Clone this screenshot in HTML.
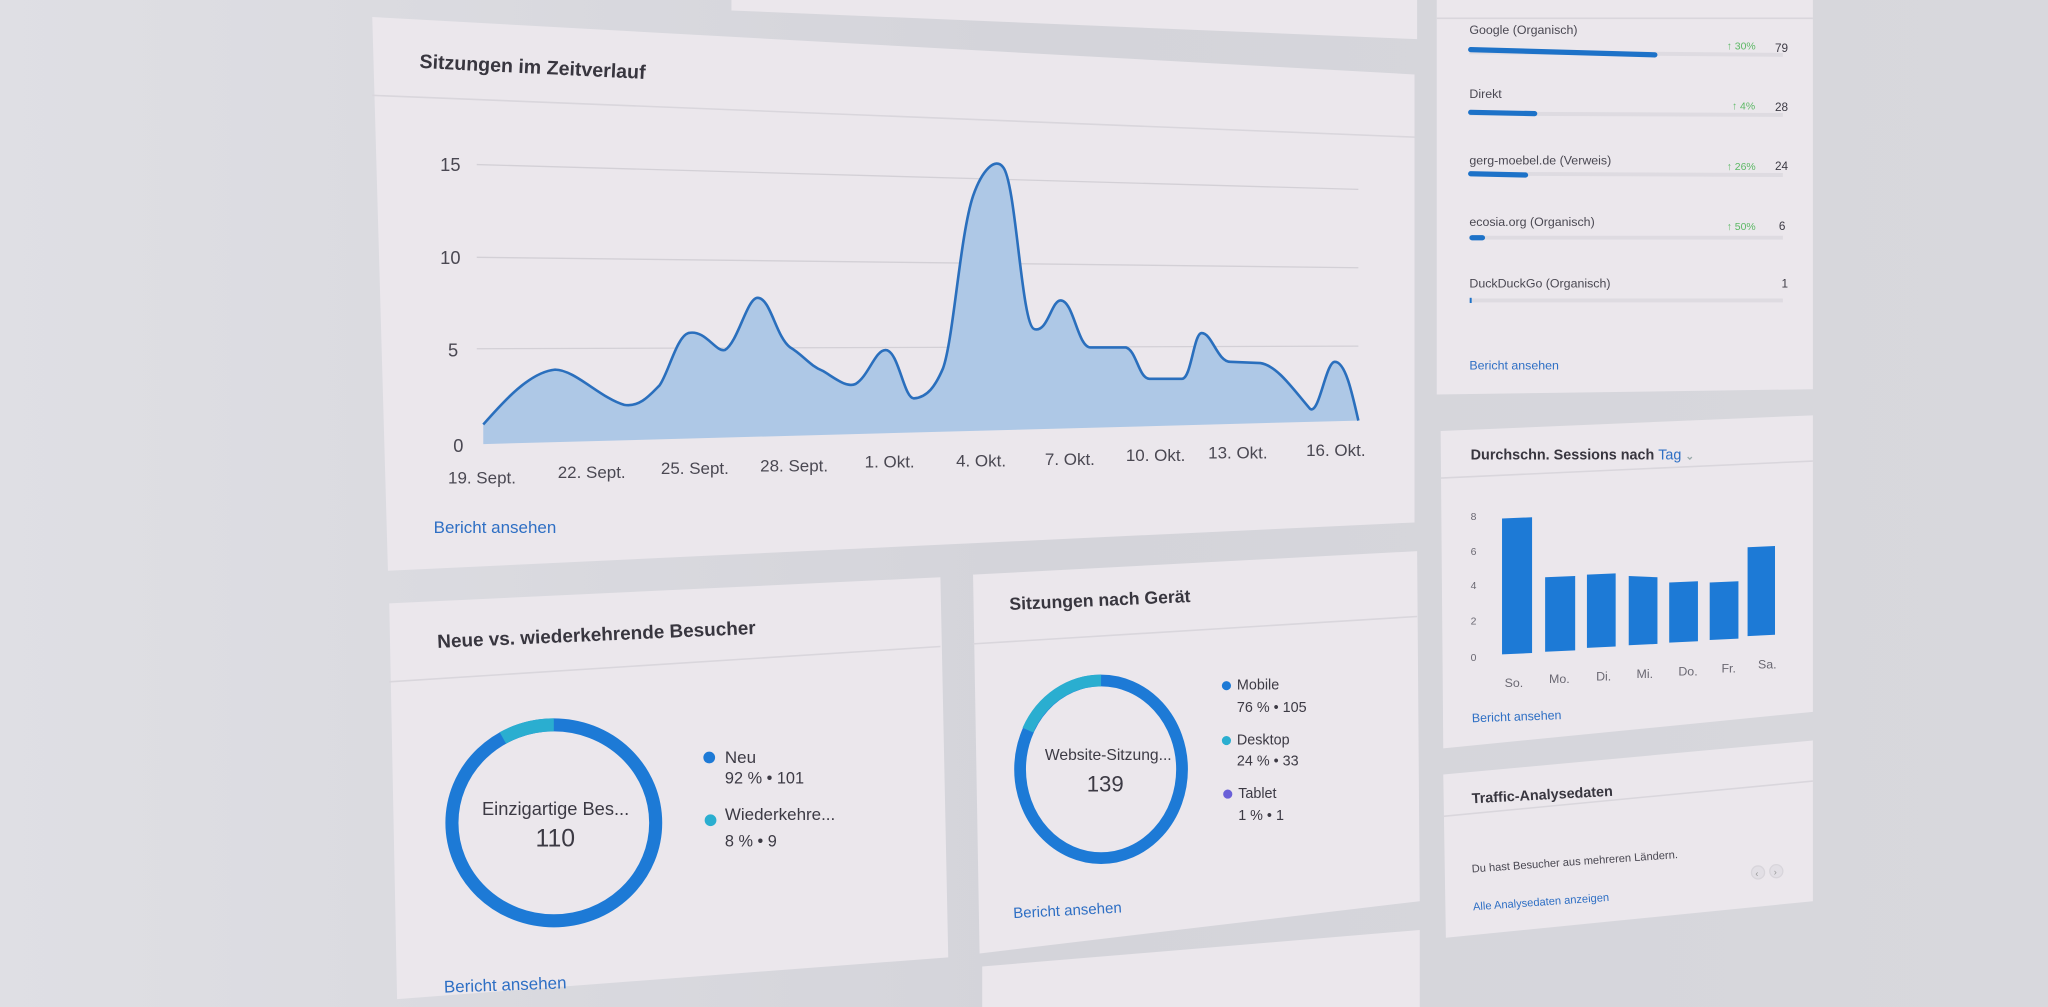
<!DOCTYPE html>
<html><head><meta charset="utf-8"><style>
html,body{margin:0;padding:0;background:#d7d7dd;overflow:hidden}
svg{display:block}
text{font-family:"Liberation Sans",sans-serif}
</style></head><body>
<svg width="2048" height="1007" viewBox="0 0 1568 771" xmlns="http://www.w3.org/2000/svg">
<defs>
<linearGradient id="bg" x1="0" y1="0" x2="1" y2="0">
<stop offset="0" stop-color="#dfdfe4"/><stop offset="0.5" stop-color="#d4d4da"/><stop offset="1" stop-color="#d8d8dd"/>
</linearGradient>
</defs>
<rect width="1568" height="771" fill="url(#bg)"/>
<g fill="#ebe7ec">
<polygon points="560,0 1085,0 1085,30 560,8"/>
<polygon points="285,13 1083,57 1083,400 297,437"/>
<polygon points="298,462 720,442 726,733 304,765"/>
<polygon points="745,440 1085,422 1087,690 750,730"/>
<polygon points="752,740 1087,712 1087,771 752,771"/>
<polygon points="1100,0 1388,0 1388,298 1100,302"/>
<polygon points="1103,330 1388,318 1388,545 1105,573"/>
<polygon points="1105,593 1388,567 1388,690 1107,718"/>
</g>
<g stroke="#d9d6dc" stroke-width="1.2" fill="none">
<line x1="285" y1="73" x2="1083" y2="105"/>
<line x1="298" y1="522" x2="720" y2="495"/>
<line x1="745" y1="493" x2="1085" y2="472"/>
<line x1="1103" y1="366" x2="1388" y2="353"/>
<line x1="1105" y1="625" x2="1388" y2="598"/>
<line x1="1100" y1="14" x2="1388" y2="14"/>
</g>
<text x="321" y="52" font-size="15" font-weight="bold" fill="#38363f" transform="rotate(2.8 321 52)">Sitzungen im Zeitverlauf</text>
<g stroke="#d3d0d6" stroke-width="1">
<line x1="365" y1="126" x2="1040" y2="145"/>
<line x1="365" y1="197" x2="1040" y2="205"/>
<line x1="365" y1="267" x2="1040" y2="265"/>
</g>
<g font-size="14" fill="#4a4852">
<text x="337" y="131">15</text><text x="337" y="202">10</text><text x="343" y="273">5</text><text x="347" y="346">0</text>
</g>
<path d="M370,325 C385,308 405,285 425,283 C440,283 460,305 478,310 C490,312 498,302 505,295 C512,285 518,258 527,255 C540,252 548,270 555,268 C565,262 572,228 580,228 C590,228 594,258 605,266 C615,272 620,280 630,284 C640,290 648,297 655,294 C665,288 670,268 678,268 C688,268 692,306 700,305 C710,304 716,296 722,282 C730,260 735,180 745,150 C752,130 762,120 768,128 C778,140 782,250 792,252 C802,255 805,230 812,230 C822,230 825,266 835,266 L862,266 C870,268 872,290 880,290 L905,290 C912,290 914,255 920,255 C928,255 932,277 942,277 L965,278 C978,280 990,298 1003,313 C1010,318 1015,277 1022,277 C1030,277 1035,300 1040,322 L370,340 Z" fill="#aec8e6" stroke="none"/>
<path d="M370,325 C385,308 405,285 425,283 C440,283 460,305 478,310 C490,312 498,302 505,295 C512,285 518,258 527,255 C540,252 548,270 555,268 C565,262 572,228 580,228 C590,228 594,258 605,266 C615,272 620,280 630,284 C640,290 648,297 655,294 C665,288 670,268 678,268 C688,268 692,306 700,305 C710,304 716,296 722,282 C730,260 735,180 745,150 C752,130 762,120 768,128 C778,140 782,250 792,252 C802,255 805,230 812,230 C822,230 825,266 835,266 L862,266 C870,268 872,290 880,290 L905,290 C912,290 914,255 920,255 C928,255 932,277 942,277 L965,278 C978,280 990,298 1003,313 C1010,318 1015,277 1022,277 C1030,277 1035,300 1040,322" fill="none" stroke="#2a6fbd" stroke-width="2"/>
<g font-size="13" fill="#4a4852">
<text x="343" y="370">19. Sept.</text><text x="427" y="366">22. Sept.</text><text x="506" y="363">25. Sept.</text><text x="582" y="361">28. Sept.</text><text x="662" y="358">1. Okt.</text><text x="732" y="357">4. Okt.</text><text x="800" y="356">7. Okt.</text><text x="862" y="353">10. Okt.</text><text x="925" y="351">13. Okt.</text><text x="1000" y="349">16. Okt.</text>
</g>
<text x="332" y="408" font-size="13" fill="#2e6fc4">Bericht ansehen</text>
<text x="335" y="496" font-size="14.5" font-weight="bold" fill="#38363f" transform="rotate(-2.5 335 496)">Neue vs. wiederkehrende Besucher</text>
<ellipse cx="424" cy="630" rx="78" ry="75" fill="none" stroke="#1d7ad6" stroke-width="10"/>
<path d="M385,565 A78,75 0 0 1 424,555" fill="none" stroke="#2aaed0" stroke-width="10"/>
<text x="369" y="624" font-size="14" fill="#3c3a44">Einzigartige Bes...</text>
<text x="410" y="648" font-size="19" fill="#3c3a44">110</text>
<circle cx="543" cy="580" r="4.5" fill="#1d7ad6"/><text x="555" y="584" font-size="13" fill="#3c3a44">Neu</text>
<text x="555" y="600" font-size="12.5" fill="#3c3a44">92 % • 101</text>
<circle cx="544" cy="628" r="4.5" fill="#2aaed0"/><text x="555" y="628" font-size="13" fill="#3c3a44">Wiederkehre...</text>
<text x="555" y="648" font-size="12.5" fill="#3c3a44">8 % • 9</text>
<text x="340" y="760" font-size="13" fill="#2e6fc4" transform="rotate(-2 340 760)">Bericht ansehen</text>
<text x="773" y="467" font-size="13.5" font-weight="bold" fill="#38363f" transform="rotate(-2.5 773 467)">Sitzungen nach Gerät</text>
<ellipse cx="843" cy="589" rx="62" ry="68" fill="none" stroke="#1d7ad6" stroke-width="9"/>
<path d="M787,559 A62,68 0 0 1 843,521" fill="none" stroke="#2aaed0" stroke-width="9"/>
<text x="800" y="582" font-size="12" fill="#3c3a44">Website-Sitzung...</text>
<text x="832" y="606" font-size="17" fill="#3c3a44">139</text>
<g font-size="11" fill="#3c3a44">
<circle cx="939" cy="525" r="3.5" fill="#1d7ad6"/><text x="947" y="528">Mobile</text><text x="947" y="545">76 % • 105</text>
<circle cx="939" cy="567" r="3.5" fill="#2aaed0"/><text x="947" y="570">Desktop</text><text x="947" y="586">24 % • 33</text>
<circle cx="940" cy="608" r="3.5" fill="#6a60d8"/><text x="948" y="611">Tablet</text><text x="948" y="628">1 % • 1</text>
</g>
<text x="776" y="703" font-size="11.5" fill="#2e6fc4" transform="rotate(-3 776 703)">Bericht ansehen</text>
<g font-size="9.5" fill="#4a4852">
<text x="1125" y="26">Google (Organisch)</text>
<text x="1125" y="75">Direkt</text>
<text x="1125" y="126">gerg-moebel.de (Verweis)</text>
<text x="1125" y="173">ecosia.org (Organisch)</text>
<text x="1125" y="220">DuckDuckGo (Organisch)</text>
</g>
<g stroke="#dedbe1" stroke-width="3"><line x1="1125" y1="40" x2="1365" y2="42"/><line x1="1125" y1="87" x2="1365" y2="88"/><line x1="1125" y1="133" x2="1365" y2="134"/><line x1="1125" y1="182" x2="1365" y2="182"/><line x1="1125" y1="230" x2="1365" y2="230"/></g>
<g stroke="#1d72c8" stroke-width="4" stroke-linecap="round"><line x1="1126" y1="38" x2="1267" y2="42"/><line x1="1126" y1="86" x2="1175" y2="87"/><line x1="1126" y1="133" x2="1168" y2="134"/><line x1="1127" y1="182" x2="1135" y2="182"/></g>
<line x1="1126" y1="228" x2="1126" y2="232" stroke="#1d72c8" stroke-width="1.5"/>
<g font-size="8" fill="#5cb865"><text x="1322" y="38">↑ 30%</text><text x="1326" y="84">↑ 4%</text><text x="1322" y="130">↑ 26%</text><text x="1322" y="176">↑ 50%</text></g>
<g font-size="9" fill="#3c3a44"><text x="1359" y="40">79</text><text x="1359" y="85">28</text><text x="1359" y="130">24</text><text x="1362" y="176">6</text><text x="1364" y="220">1</text></g>
<text x="1125" y="283" font-size="9.5" fill="#2e6fc4">Bericht ansehen</text>
<text x="1126" y="352" font-size="11" font-weight="bold" fill="#38363f">Durchschn. Sessions nach <tspan fill="#2e6fc4" font-weight="normal">Tag</tspan> <tspan fill="#9aa" font-size="8"> ⌄</tspan></text>
<g font-size="8" fill="#6a6872"><text x="1126" y="398">8</text><text x="1126" y="425">6</text><text x="1126" y="451">4</text><text x="1126" y="478">2</text><text x="1126" y="506">0</text></g>
<g fill="#1d7ad6">
<polygon points="1150,397 1173,396 1173,500 1150,501"/>
<polygon points="1183,442 1206,441 1206,498 1183,499"/>
<polygon points="1215,440 1237,439 1237,495 1215,496"/>
<polygon points="1247,441 1269,442 1269,493 1247,494"/>
<polygon points="1278,446 1300,445 1300,491 1278,492"/>
<polygon points="1309,446 1331,445 1331,489 1309,490"/>
<polygon points="1338,419 1359,418 1359,486 1338,487"/>
</g>
<g font-size="9.5" fill="#6a6872"><text x="1152" y="526">So.</text><text x="1186" y="523">Mo.</text><text x="1222" y="521">Di.</text><text x="1253" y="519">Mi.</text><text x="1285" y="517">Do.</text><text x="1318" y="515">Fr.</text><text x="1346" y="512">Sa.</text></g>
<text x="1127" y="553" font-size="9.5" fill="#2e6fc4" transform="rotate(-2 1127 553)">Bericht ansehen</text>
<text x="1127" y="615" font-size="11" font-weight="bold" fill="#38363f" transform="rotate(-3 1127 615)">Traffic-Analysedaten</text>
<text x="1127" y="668" font-size="8.5" fill="#4a4852" transform="rotate(-4 1127 668)">Du hast Besucher aus mehreren Ländern.</text>
<text x="1128" y="697" font-size="8.5" fill="#2e6fc4" transform="rotate(-4 1128 697)">Alle Analysedaten anzeigen</text>
<circle cx="1346" cy="668" r="5" fill="#e2dfe5" stroke="#d8d5db"/><circle cx="1360" cy="667" r="5" fill="#e2dfe5" stroke="#d8d5db"/>
<text x="1344" y="671" font-size="7" fill="#999">‹</text><text x="1358" y="670" font-size="7" fill="#999">›</text>
</svg>
</body></html>
